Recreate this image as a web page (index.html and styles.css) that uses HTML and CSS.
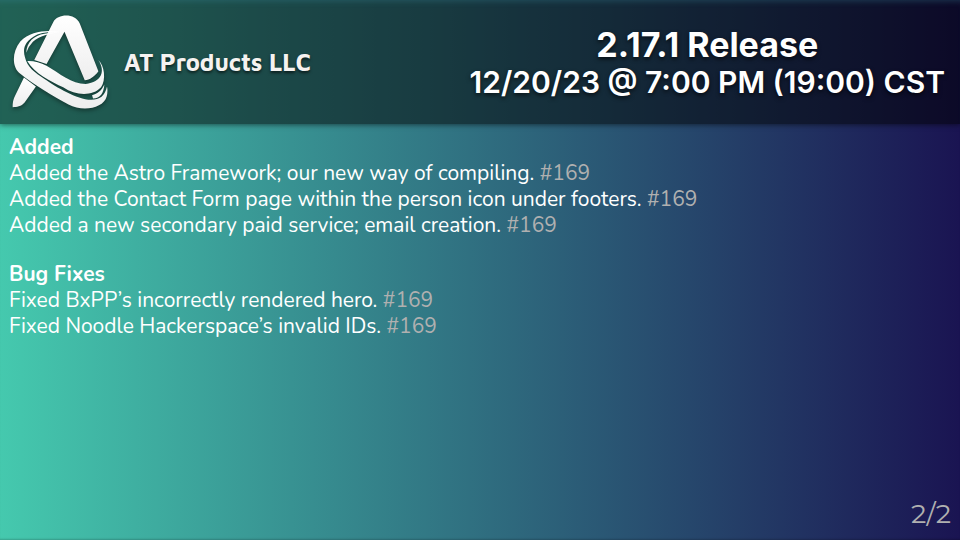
FILE: index.html
```html
<!DOCTYPE html>
<html lang="en">
<head>
<meta charset="utf-8">
<title>2.17.1 Release</title>
<link rel="stylesheet" href="styles.css">
</head>
<body>
<header class="banner">
  <div class="brand">
    <svg class="logo" viewBox="36 42 292 288" aria-hidden="true">
      <defs><linearGradient id="metal" x1="0" y1="0" x2="0" y2="1"><stop offset="0" stop-color="#fff"/><stop offset="1" stop-color="#eee"/></linearGradient></defs>
      <g fill="url(#metal)">
        <path d="M160 66C174 40 226 38 240 70L296 214C285 230 270 240 255 241L194 95L140 192L103 180Z"/>
        <path d="M72 233L108 260L74 308C64 320 50 322 38 322C38 306 40 298 46 286Z"/>
        <path d="M180 96C145 89 92 92 61 124C34 158 36 204 62 222C100 254 160 288 206 314C250 338 312 325 321 290Q325 274 322 260C316 288 300 300 274 300C230 298 170 262 134 237C104 218 82 202 75 172C68 146 72 124 112 103C132 96 155 96 180 96Z"/>
        <path d="M79 158C80 126 102 106 134 101Q158 97 180 96C150 101 118 108 99 125Q86 138 79 158Z"/>
        <path d="M82 183C100 182 122 188 140 197C180 220 215 252 258 252C306 246 318 214 296 180C314 196 320 240 304 262C278 290 228 288 190 262C150 244 104 220 82 183Z"/>
        <path d="M314 254C312 280 302 296 280 296L277 286C294 282 306 272 314 254Z"/>
      </g>
    </svg>
    <span class="brand-name">AT Products LLC</span>
  </div>
  <div class="release">
    <h1 class="version">2.17.1 Release</h1>
    <p class="date">12/20/23 @ 7:00 PM (19:00) CST</p>
  </div>
</header>
<main class="notes">
  <section>
    <h2>Added</h2>
    <ul>
      <li>Added the Astro Framework; our new way of compiling. <span class="ref">#169</span></li>
      <li>Added the Contact Form page within the person icon under footers. <span class="ref">#169</span></li>
      <li>Added a new secondary paid service; email creation. <span class="ref">#169</span></li>
    </ul>
  </section>
  <section>
    <h2>Bug Fixes</h2>
    <ul>
      <li>Fixed BxPP’s incorrectly rendered hero. <span class="ref">#169</span></li>
      <li>Fixed Noodle Hackerspace’s invalid IDs. <span class="ref">#169</span></li>
    </ul>
  </section>
</main>
<footer class="page">2/2</footer>
</body>
</html>
```
FILE: styles.css
```css
* { box-sizing: border-box; margin: 0; padding: 0; }
body {
  min-height: 100vh;
  display: flex;
  flex-direction: column;
  background: linear-gradient(90deg, #45c9ae, #1a1452);
  color: #fff;
  font-family: Nunito, Lato, sans-serif;
  box-shadow: inset 0 -2px 2px -1px rgba(0, 0, 0, 0.2);
}
.banner {
  display: flex;
  justify-content: space-between;
  align-items: center;
  padding: 14px 15px 14px 12px;
  background: rgba(0, 0, 0, 0.51);
  box-shadow: 0 1px 5px rgba(0, 0, 0, 0.5), inset 0 6px 6px -5px rgba(60, 140, 160, 0.35);
}
.brand { display: flex; align-items: center; gap: 15px; }
.logo { width: 97px; height: 96px; filter: drop-shadow(0 2px 2px rgba(0, 0, 0, 0.4)); }
.brand-name {
  font: 700 24px "Maven Pro", Montserrat, sans-serif;
  color: #f5f2f0;
  text-shadow: 0 2px 3px rgba(0, 0, 0, 0.6);
}
.release {
  padding-top: 2px;
  font-family: Inter, sans-serif;
  text-align: center;
  text-shadow: 0 2px 4px rgba(0, 0, 0, 0.7);
}
.version { font-size: 34px; line-height: 38px; font-weight: 700; }
.date { font-size: 30px; line-height: 36px; font-weight: 600; }
.notes {
  flex: 1;
  display: flex;
  flex-direction: column;
  gap: 23px;
  padding: 10px 9px;
  font-size: 21px;
  font-weight: 400;
  line-height: 26px;
}
h2 { font-size: 21px; font-weight: 700; }
ul { list-style: none; }
.ref { color: #b0b0b0; }
.page {
  padding: 8px 9px;
  text-align: right;
  font: 400 27px/36px Montserrat, "Open Sans", sans-serif;
  color: #b0b0b0;
}
```
